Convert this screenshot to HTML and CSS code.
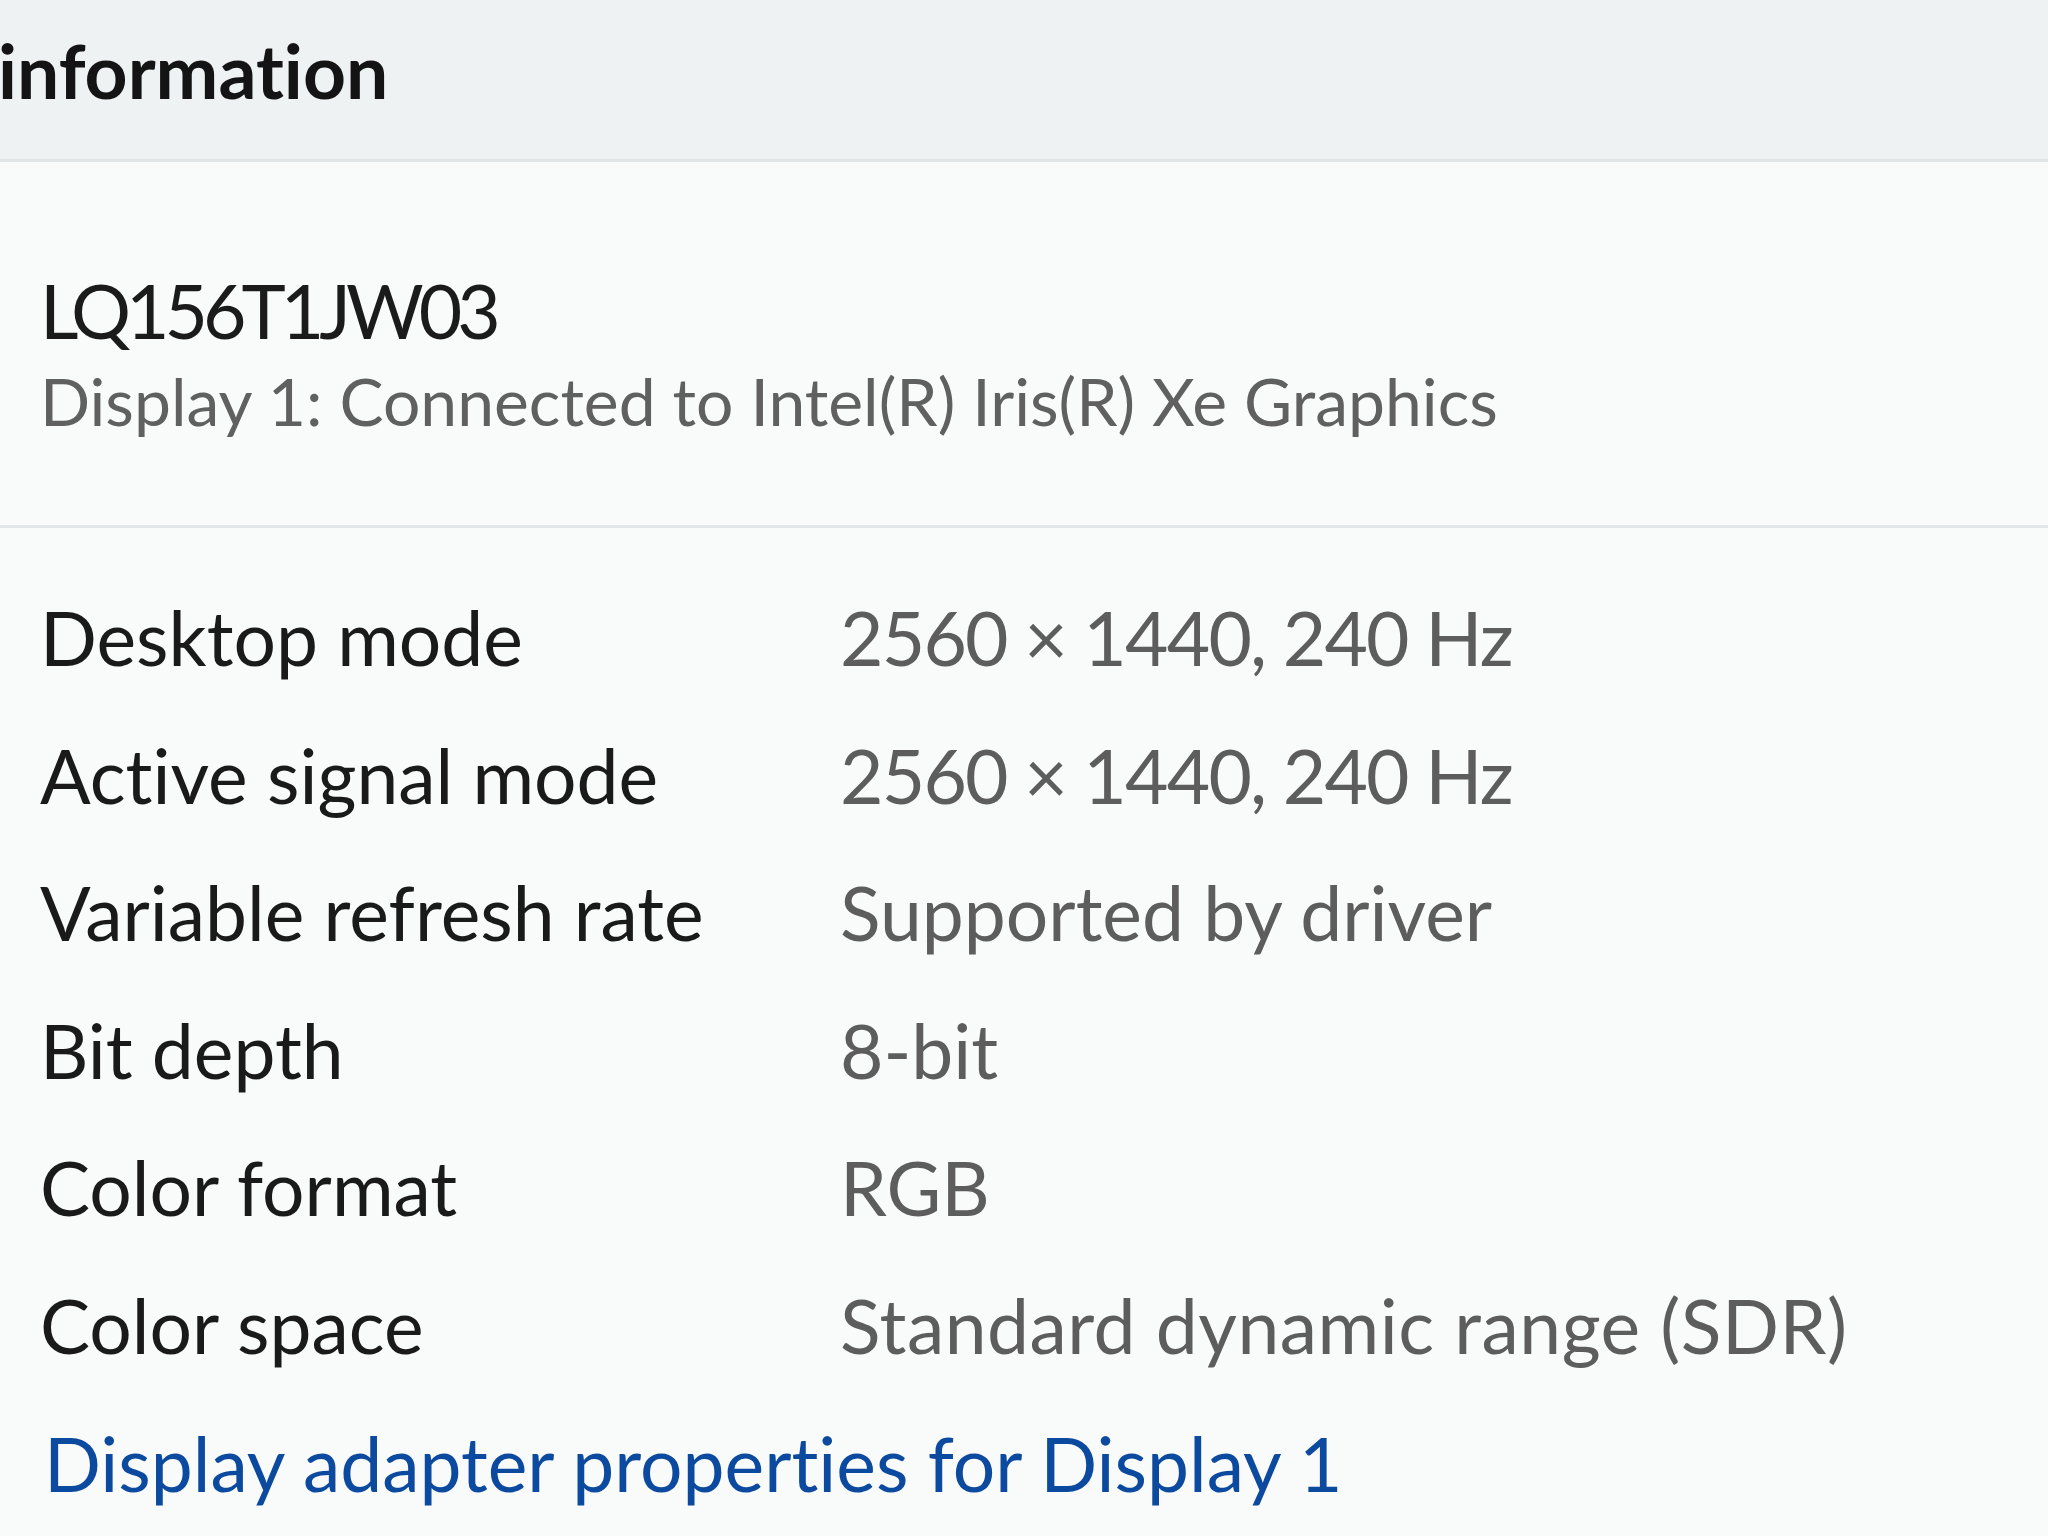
FILE: index.html
```html
<!DOCTYPE html>
<html lang="en">
<head>
<meta charset="utf-8">
<title>Display information</title>
<link rel="stylesheet" href="styles.css">
</head>
<body>
<div class="page">
  <header class="card-header">
    <span class="header-title">information</span>
  </header>
  <section class="monitor">
    <div class="monitor-name">LQ156T1JW03</div>
    <div class="monitor-sub">Display 1: Connected to Intel(R) Iris(R) Xe Graphics</div>
  </section>
  <section class="details">
    <div class="row"><span class="label">Desktop mode</span><span class="value num">2560 × 1440, 240 Hz</span></div>
    <div class="row"><span class="label">Active signal mode</span><span class="value num">2560 × 1440, 240 Hz</span></div>
    <div class="row"><span class="label">Variable refresh rate</span><span class="value">Supported by driver</span></div>
    <div class="row"><span class="label">Bit depth</span><span class="value">8-bit</span></div>
    <div class="row"><span class="label">Color format</span><span class="value">RGB</span></div>
    <div class="row"><span class="label">Color space</span><span class="value wide">Standard dynamic range (SDR)</span></div>
    <a class="link" href="#">Display adapter properties for Display 1</a>
  </section>
</div>
</body>
</html>
```
FILE: styles.css
```css
html, body {
  margin: 0;
  padding: 0;
  background: #f9fafa;
}
.page {
  width: 2048px;
  height: 1536px;
  overflow: hidden;
  font-family: Lato, "Open Sans", sans-serif;
  font-variant-ligatures: none;
  font-feature-settings: "liga" 0, "dlig" 0;
  color: #1b1b1b;
  background: #f9fafa;
}
.card-header {
  height: 162px;
  box-sizing: border-box;
  padding: 20px 0 0 0;
  background: #eef2f3;
  border-bottom: 3px solid #e1e5e6;
}
.header-title {
  display: block;
  font-size: 75px;
  font-weight: 700;
  line-height: 100px;
  color: #141414;
  text-indent: -2px;
  white-space: nowrap;
}
.monitor {
  padding: 100px 0 81px 40px;
  border-bottom: 3px solid #e3e7e8;
}
.monitor-name {
  font-size: 75px;
  line-height: 96px;
  letter-spacing: -5px;
  color: #1b1b1b;
  white-space: nowrap;
}
.monitor-sub {
  font-size: 66px;
  line-height: 86px;
  color: #606060;
  white-space: nowrap;
}
.details {
  padding: 41px 0 0 40px;
  display: flex;
  flex-direction: column;
}
.row {
  display: grid;
  grid-template-columns: 800px 1fr;
  height: 137.6px;
  line-height: 137.6px;
  font-size: 75px;
  white-space: nowrap;
}
.label {
  color: #1a1a1a;
}
.value {
  color: #5d5d5d;
}
.value.num {
  letter-spacing: -1.8px;
}
.value.wide {
  letter-spacing: 0.5px;
}
.link {
  display: block;
  margin: 0 0 0 4px;
  font-size: 75px;
  line-height: 137.6px;
  color: #0b4a9f;
  text-decoration: none;
  white-space: nowrap;
}
```
